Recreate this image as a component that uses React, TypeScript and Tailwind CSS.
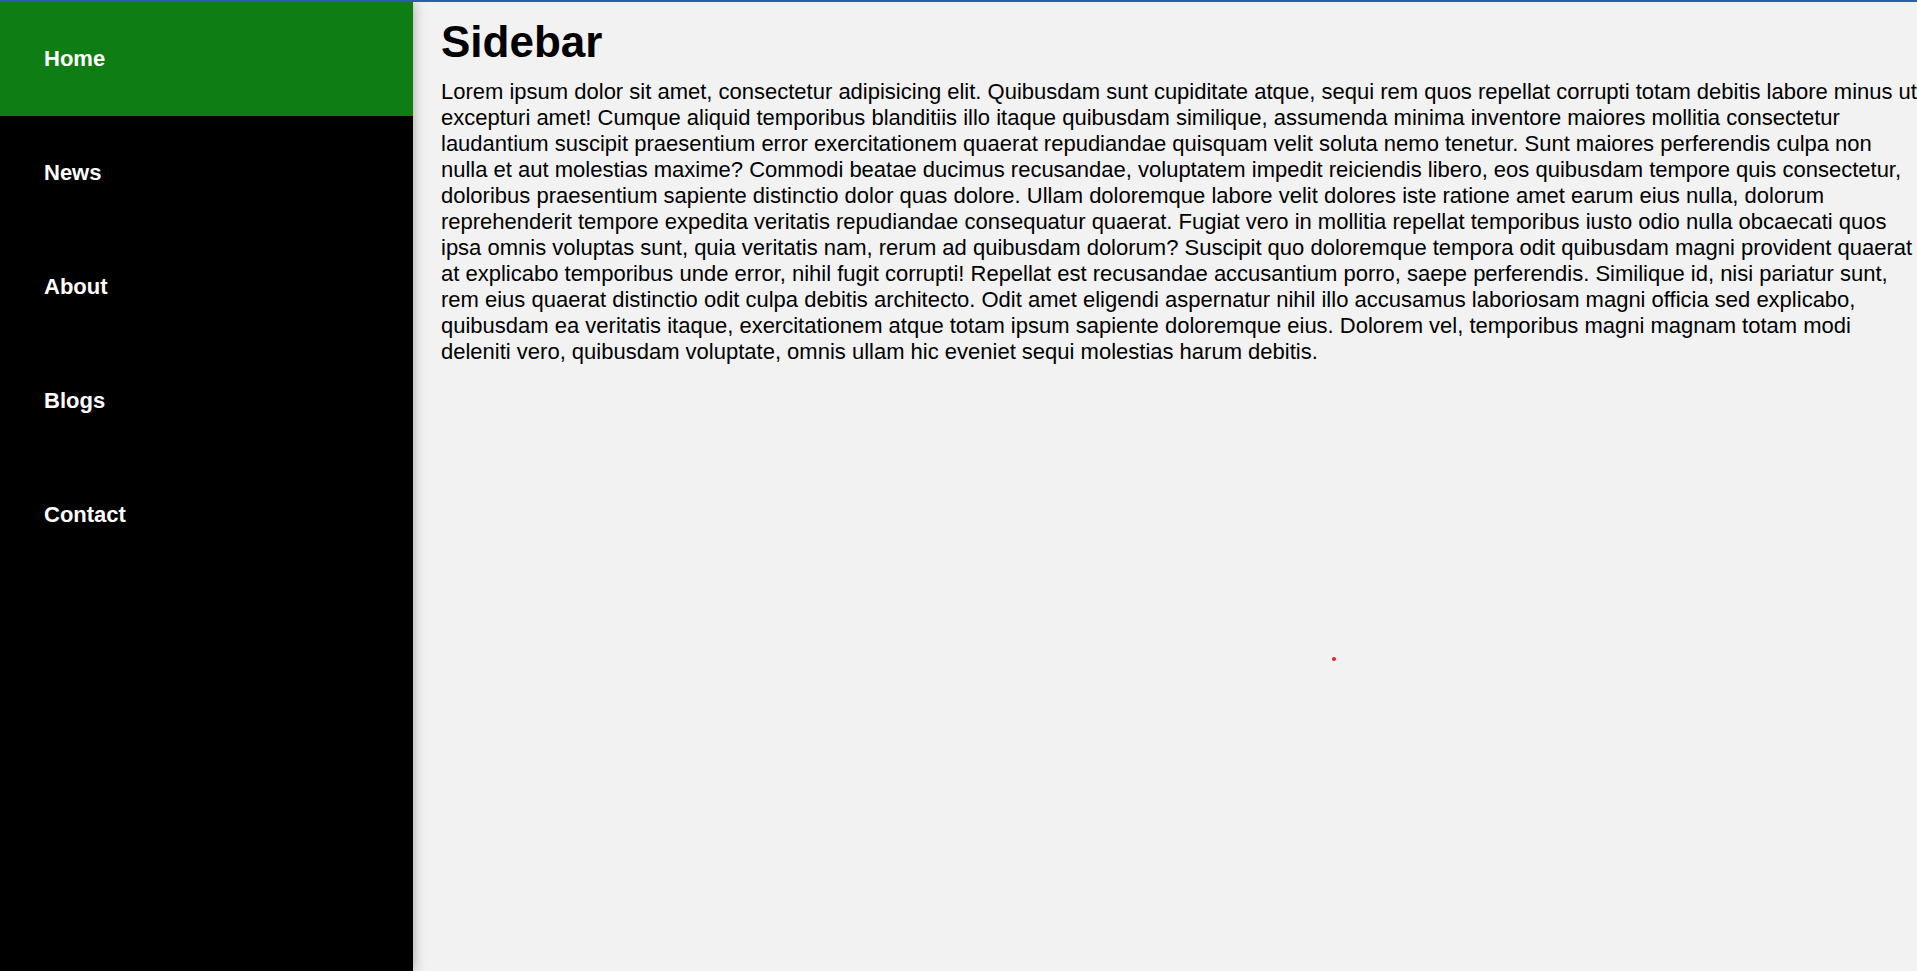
import React from "react";

const items = ["Home", "News", "About", "Blogs", "Contact"];

const text =
  "Lorem ipsum dolor sit amet, consectetur adipisicing elit. Quibusdam sunt cupiditate atque, sequi rem quos repellat corrupti totam debitis labore minus ut excepturi amet! Cumque aliquid temporibus blanditiis illo itaque quibusdam similique, assumenda minima inventore maiores mollitia consectetur laudantium suscipit praesentium error exercitationem quaerat repudiandae quisquam velit soluta nemo tenetur. Sunt maiores perferendis culpa non nulla et aut molestias maxime? Commodi beatae ducimus recusandae, voluptatem impedit reiciendis libero, eos quibusdam tempore quis consectetur, doloribus praesentium sapiente distinctio dolor quas dolore. Ullam doloremque labore velit dolores iste ratione amet earum eius nulla, dolorum reprehenderit tempore expedita veritatis repudiandae consequatur quaerat. Fugiat vero in mollitia repellat temporibus iusto odio nulla obcaecati quos ipsa omnis voluptas sunt, quia veritatis nam, rerum ad quibusdam dolorum? Suscipit quo doloremque tempora odit quibusdam magni provident quaerat at explicabo temporibus unde error, nihil fugit corrupti! Repellat est recusandae accusantium porro, saepe perferendis. Similique id, nisi pariatur sunt, rem eius quaerat distinctio odit culpa debitis architecto. Odit amet eligendi aspernatur nihil illo accusamus laboriosam magni officia sed explicabo, quibusdam ea veritatis itaque, exercitationem atque totam ipsum sapiente doloremque eius. Dolorem vel, temporibus magni magnam totam modi deleniti vero, quibusdam voluptate, omnis ullam hic eveniet sequi molestias harum debitis.";

export default function App() {
  return (
    <div
      className="relative flex h-[971px] w-full overflow-hidden border-t-2 border-[#2a5fac] bg-[#f2f2f2]"
      style={{ fontFamily: '"Liberation Sans", Arial, sans-serif' }}
    >
      <nav className="relative z-10 flex w-[413px] shrink-0 flex-col bg-black shadow-[0_0_12px_rgba(0,0,0,0.35)]">
        {items.map((it, i) => (
          <a
            key={it}
            className={`flex h-[114px] items-center pb-[2px] pl-[44px] text-[22px] font-bold text-white ${
              i === 0 ? "bg-[#0e7d13]" : "bg-black"
            }`}
          >
            {it}
          </a>
        ))}
      </nav>
      <main className="min-w-0 flex-1 pl-[28px] pr-0 pt-[15px] text-black">
        <h1 className="text-[44px] font-bold leading-[50px]">Sidebar</h1>
        <p className="mt-[12px] text-[22px] leading-[26px]">{text}</p>
      </main>
      <div className="absolute left-[1332px] top-[655px] h-[4px] w-[4px] rounded-full bg-[#ee1c24]" />
    </div>
  );
}
